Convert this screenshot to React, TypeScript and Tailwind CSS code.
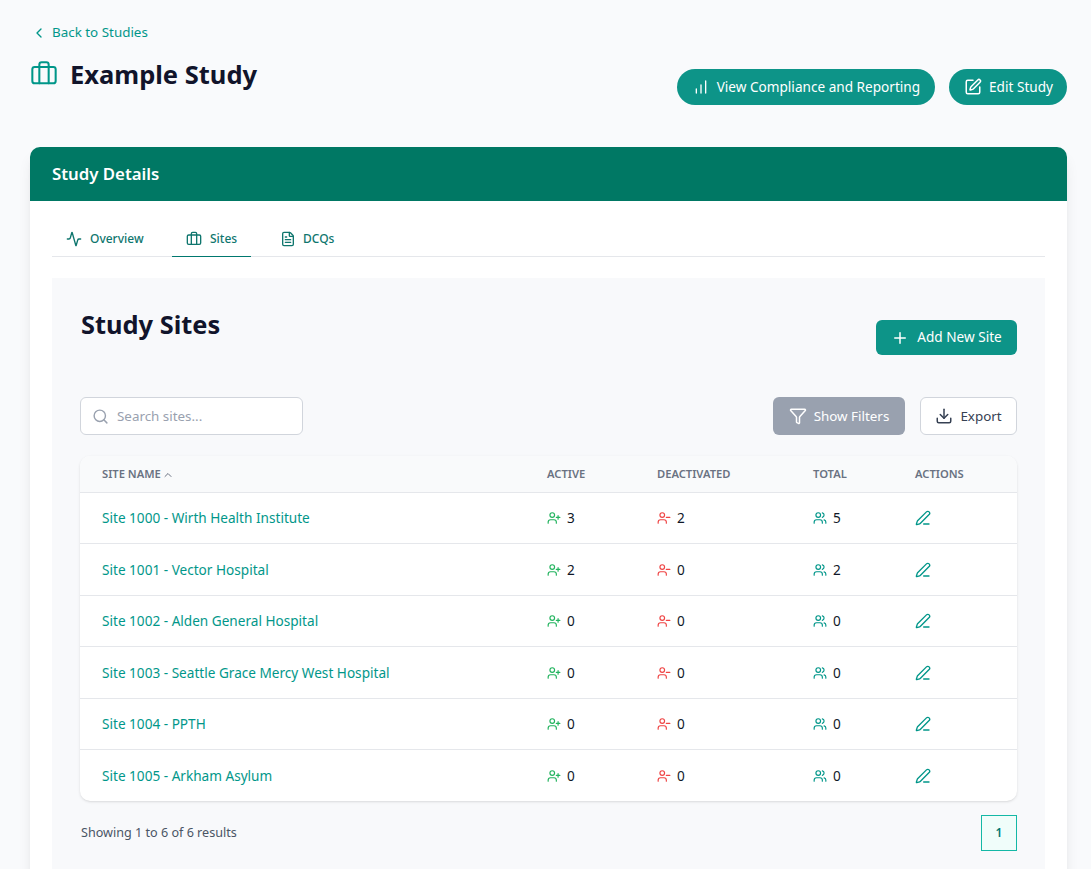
import {
  Activity,
  Briefcase,
  ChartNoAxesColumnIncreasing,
  ChevronLeft,
  ChevronUp,
  Download,
  FileText,
  Funnel,
  PenLine,
  Plus,
  Search,
  SquarePen,
  UserMinus,
  UserPlus,
  Users,
} from 'lucide-react';

const sites = [
  { name: 'Site 1000 - Wirth Health Institute', active: 3, deactivated: 2, total: 5 },
  { name: 'Site 1001 - Vector Hospital', active: 2, deactivated: 0, total: 2 },
  { name: 'Site 1002 - Alden General Hospital', active: 0, deactivated: 0, total: 0 },
  { name: 'Site 1003 - Seattle Grace Mercy West Hospital', active: 0, deactivated: 0, total: 0 },
  { name: 'Site 1004 - PPTH', active: 0, deactivated: 0, total: 0 },
  { name: 'Site 1005 - Arkham Asylum', active: 0, deactivated: 0, total: 0 },
];

export default function App() {
  return (
    <div className="h-[869px] overflow-hidden bg-[#f9fafc] pl-[30px] pr-[24px] pt-[24px] font-['Noto_Sans',sans-serif] text-gray-900">
      {/* Page header */}
      <a className="flex h-[17px] items-center gap-[5px] pl-[1px] text-[13.4px] text-teal-600">
        <ChevronLeft className="size-4" />
        Back to Studies
      </a>
      <div className="flex items-start justify-between">
        <div className="mt-[17px] flex items-start gap-[12px]">
          <Briefcase className="mt-[2px] size-7 text-teal-600" strokeWidth={1.75} />
          <h1 className="text-[25.5px] font-bold leading-[32px] text-[#11142b]">Example Study</h1>
        </div>
        <div className="mt-[28px] flex gap-[14px]">
          <button type="button" className="flex h-[36px] items-center gap-[8px] rounded-full bg-[#0d9488] pl-[16px] pr-[15px] text-[13.6px] text-white">
            <ChartNoAxesColumnIncreasing className="size-4" />
            View Compliance and Reporting
          </button>
          <button type="button" className="flex h-[36px] items-center gap-[7px] rounded-full bg-[#0d9488] pl-[15px] pr-[14px] text-[13.6px] text-white">
            <SquarePen className="size-[18px]" />
            Edit Study
          </button>
        </div>
      </div>

      {/* Card */}
      <div className="mt-[42px] rounded-t-[10px] bg-white shadow-lg">
        <div className="flex h-[54px] items-center rounded-t-[10px] bg-[#007864] px-[22px] pb-[1px] text-[16.8px] font-semibold text-white">
          Study Details
        </div>
        <div className="px-[22px] pb-[60px] pt-[20px]">
          <div className="flex h-[36px] border-b border-gray-200 text-[12px] font-medium text-[#0f766e]">
            <div className="flex w-[120px] items-center gap-[8px] pl-[14px] pt-[1px]">
              <Activity className="size-4" />
              Overview
            </div>
            <div className="flex h-[36px] w-[79px] items-center gap-[8px] border-b border-teal-700 pl-[14px]">
              <Briefcase className="size-4" />
              Sites
            </div>
            <div className="flex w-[110px] items-center gap-[7px] pl-[29px] pt-[1px]">
              <FileText className="size-4" />
              DCQs
            </div>
          </div>

          {/* Sites panel */}
          <div className="mt-[21px] bg-[#f8f9fb] px-[28px] pt-[28px]">
            <div className="flex items-start justify-between">
              <h2 className="pl-[1px] text-[25.4px] font-bold leading-[36px] text-[#11142b]">Study Sites</h2>
              <button type="button" className="mt-[14px] flex h-[35px] w-[141px] items-center justify-center gap-[8px] rounded-md bg-[#0d9488] text-[13.6px] text-white">
                <Plus className="size-[18px]" />
                Add New Site
              </button>
            </div>

            <div className="mt-[42px] flex items-center justify-between">
              <div className="flex h-[38px] w-[223px] items-center gap-[8px] rounded-md border border-gray-300 bg-white pl-[11px] text-[13.4px] text-gray-400">
                <Search className="size-[17px]" />
                Search sites...
              </div>
              <div className="flex gap-[15px]">
                <button type="button" className="flex h-[38px] w-[132px] items-center justify-center gap-[7px] rounded-md bg-gray-400 text-[13.4px] text-white">
                  <Funnel className="size-[18px]" />
                  Show Filters
                </button>
                <button type="button" className="flex h-[38px] w-[97px] items-center justify-center gap-[7px] rounded-md border border-gray-300 bg-white text-[13.4px] text-gray-700">
                  <Download className="size-[18px]" />
                  Export
                </button>
              </div>
            </div>

            {/* Table */}
            <div className="mt-[21px] rounded-[10px] bg-white shadow-sm">
              <table className="w-full table-fixed border-collapse">
                <thead>
                  <tr className="h-[36px] border-b border-gray-200 bg-[#f9fafb] text-left text-[11.2px] font-semibold text-gray-500">
                    <th className="w-[445px] rounded-tl-[10px] pl-[22px] pt-[2px] font-semibold">
                      <span className="flex items-center gap-[1px]">
                        SITE NAME
                        <ChevronUp className="size-3" />
                      </span>
                    </th>
                    <th className="w-[110px] pl-[22px] pt-[2px] font-semibold">ACTIVE</th>
                    <th className="w-[156px] pl-[22px] pt-[2px] font-semibold">DEACTIVATED</th>
                    <th className="w-[102px] pl-[22px] pt-[2px] font-semibold">TOTAL</th>
                    <th className="rounded-tr-[10px] pl-[22px] pt-[2px] font-semibold">ACTIONS</th>
                  </tr>
                </thead>
                <tbody className="text-[13.6px]">
                  {sites.map((site, i) => (
                    <tr key={site.name} className={i < sites.length - 1 ? 'h-[51.5px] border-b border-gray-200' : 'h-[51.5px]'}>
                      <td className="pl-[22px] pt-[1px] text-teal-600">{site.name}</td>
                      <td className="pl-[22px] pt-[1px]">
                        <span className="flex items-center gap-[6px]">
                          <UserPlus className="size-[14px] text-[#22b35e]" />
                          {site.active}
                        </span>
                      </td>
                      <td className="pl-[22px] pt-[1px]">
                        <span className="flex items-center gap-[6px]">
                          <UserMinus className="size-[14px] text-[#ef4444]" />
                          {site.deactivated}
                        </span>
                      </td>
                      <td className="pl-[22px] pt-[1px]">
                        <span className="flex items-center gap-[6px]">
                          <Users className="size-[14px] text-teal-600" />
                          {site.total}
                        </span>
                      </td>
                      <td className="pl-[22px] pt-[1px]">
                        <PenLine className="size-4 text-teal-600" />
                      </td>
                    </tr>
                  ))}
                </tbody>
              </table>
            </div>

            {/* Pagination */}
            <div className="mt-[14px] flex items-center justify-between pb-[20px] pl-[1px]">
              <span className="text-[12.6px] text-gray-600">Showing 1 to 6 of 6 results</span>
              <span className="flex size-[36px] items-center justify-center border border-[#14b8a6] bg-[#f0fdfa] text-[12px] font-semibold text-teal-700">1</span>
            </div>
          </div>
        </div>
      </div>
    </div>
  );
}
